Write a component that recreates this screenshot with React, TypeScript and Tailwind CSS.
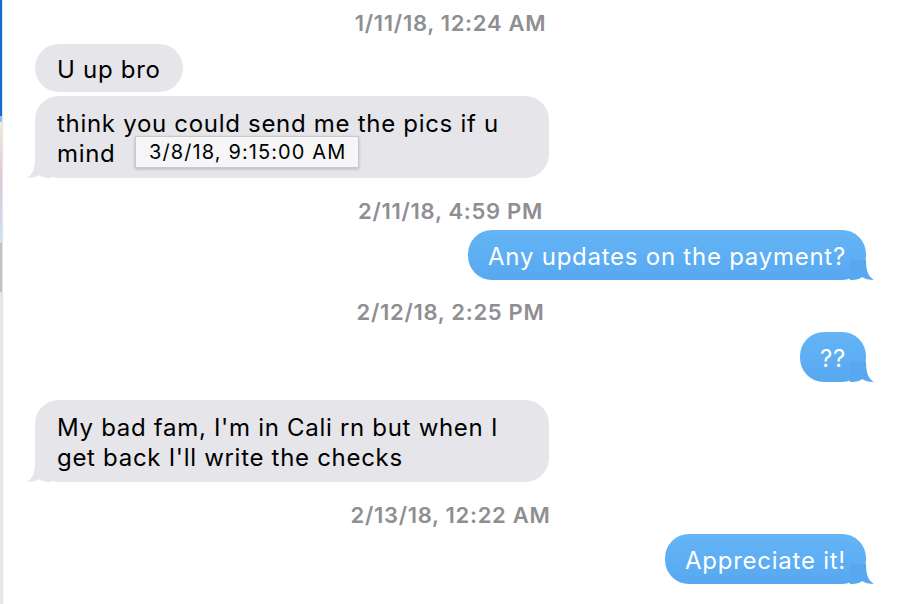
import React from 'react'

const font = { fontFamily: 'Inter, "Liberation Sans", sans-serif' }

const Stamp: React.FC<{ text: string; className?: string }> = ({ text, className = '' }) => (
  <div className={`text-center text-[22px] leading-[22px] font-semibold tracking-[0.7px] text-[#8e8e93] ${className}`}>{text}</div>
)

const LeftTail = () => (
  <svg className="absolute -left-[8px] bottom-0" width="24" height="20" viewBox="0 0 24 20">
    <path d="M8 0 C8 12 5 17 0 20 C5 20 9 19 12 17 C14 19 17 20 24 20 L24 0 Z" fill="#e5e5ea" />
  </svg>
)

const RightTail = () => (
  <svg className="absolute -right-[8px] bottom-0" width="24" height="20" viewBox="0 0 24 20">
    <path d="M16 0 C16 12 19 17 24 20 C19 20 15 19 12 17 C10 19 7 20 0 20 L0 0 Z" fill="#57a8f0" />
  </svg>
)

const Incoming: React.FC<{ children: React.ReactNode; tail?: boolean; className?: string }> = ({ children, tail, className = '' }) => (
  <div className={`relative self-start rounded-[24px] bg-[#e5e5ea] px-[22px] text-[24px] tracking-[0.7px] text-black ${className}`}>
    {tail && <LeftTail />}
    <div className="relative">{children}</div>
  </div>
)

const Outgoing: React.FC<{ children: React.ReactNode; className?: string }> = ({ children, className = '' }) => (
  <div className={`relative self-end rounded-[24px] bg-linear-to-b from-[#64b5f6] to-[#57a8f0] px-[20px] pt-[12px] pb-[8px] text-[24px] leading-[30px] tracking-[0.75px] text-white ${className}`}>
    <RightTail />
    <div className="relative">{children}</div>
  </div>
)

export default function App() {
  return (
    <div className="flex h-[604px] w-[898px] overflow-hidden bg-white" style={font}>
      {/* sidebar edge */}
      <div className="flex w-[3px] flex-col border-r border-[#e2e2e2]">
        <div className="h-[116px] bg-[#1769d4]" />
        <div className="h-[6px] bg-[#8ec0f0]" />
        <div className="h-[121px] bg-linear-to-b from-[#f3ead6] via-[#dcc8dc] to-[#c6e6ee]" />
        <div className="h-[49px] bg-[#c2c2c2]" />
        <div className="flex-1 bg-[#e8e8e8]" />
      </div>

      <div className="flex flex-1 flex-col pl-[32px] pr-[32px]">
        <Stamp text="1/11/18, 12:24 AM" className="mt-[12px]" />

        <Incoming className="mt-[10px] pt-[12px] pb-[8px] leading-[28px]">U up bro</Incoming>

        <Incoming tail className="mt-[4px] w-[514px] pt-[13px] pb-[9px] leading-[30px]">
          think you could send me the pics if u<br />mind
          <div className="absolute left-[78px] top-[27px] flex h-[32px] w-[224px] items-center border border-[#c9c9c9] bg-[#f6f6f6] pl-[13px] text-[20px] tracking-[1.1px] text-black shadow-[0_1px_3px_rgba(0,0,0,0.2)]">
            3/8/18, 9:15:00 AM
          </div>
        </Incoming>

        <Stamp text="2/11/18, 4:59 PM" className="mt-[22px]" />
        <Outgoing className="mt-[8px]">Any updates on the payment?</Outgoing>

        <Stamp text="2/12/18, 2:25 PM" className="mt-[21px]" />
        <Outgoing className="mt-[9px]">??</Outgoing>

        <Incoming tail className="mt-[18px] w-[514px] pt-[13px] pb-[9px] leading-[30px]">
          My bad fam, I'm in Cali rn but when I<br />get back I'll write the checks
        </Incoming>

        <Stamp text="2/13/18, 12:22 AM" className="mt-[22px]" />
        <Outgoing className="mt-[8px]">Appreciate it!</Outgoing>
      </div>
    </div>
  )
}
